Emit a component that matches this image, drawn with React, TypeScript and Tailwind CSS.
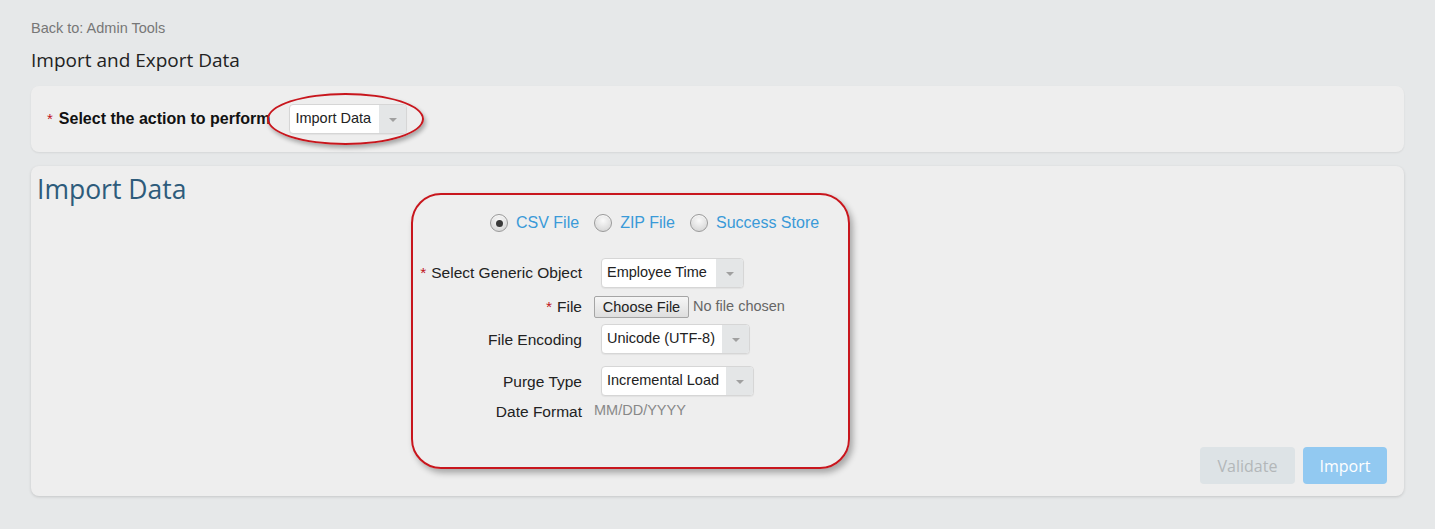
import { FC } from "react";

const arial = "font-['Liberation_Sans',Arial,sans-serif]";
const open = "font-['Open_Sans',sans-serif]";

interface SelectBoxProps {
  value: string;
  width: string;
}

const SelectBox: FC<SelectBoxProps> = ({ value, width }) => (
  <div
    className={`flex h-[30px] ${width} overflow-hidden rounded-[4px] border border-[#d6d6d6] bg-white shadow-[0_1px_1px_rgba(0,0,0,0.05)]`}
  >
    <div className={`flex flex-1 items-center pl-[5px] text-[14.5px] text-[#222] ${arial}`}>{value}</div>
    <div className="flex w-[27px] items-center justify-center bg-[#e4e6e7]">
      <span className="mt-[2px] h-0 w-0 border-x-[4px] border-t-[4px] border-x-transparent border-t-[#a0a0a0]" />
    </div>
  </div>
);

const Radio: FC<{ checked?: boolean; label: string }> = ({ checked, label }) => (
  <label className="flex items-center gap-[8px]">
    <span className="flex h-[18px] w-[18px] items-center justify-center rounded-full border border-[#9a9a9a] bg-[radial-gradient(circle_at_50%_35%,#fafafa,#cfcfcf)] shadow-[inset_0_1px_1px_rgba(255,255,255,0.8)]">
      {checked && <span className="h-[7px] w-[7px] rounded-full bg-[#3a3a3a]" />}
    </span>
    <span className={`text-[16px] text-[#3a9ad8] ${arial}`}>{label}</span>
  </label>
);

const FormLabel: FC<{ text: string; required?: boolean }> = ({ text, required }) => (
  <div className={`w-[169px] shrink-0 text-right text-[15.5px] text-[#222] ${arial}`}>
    {required && <span className="mr-[5px] text-[#c0141c]">*</span>}
    {text}
  </div>
);

export default function App() {
  return (
    <div className="min-h-[529px] bg-[#e6e8e9] px-[31px] pt-[19px]">
      <div className={`text-[14.5px] leading-[18px] text-[#777] ${arial}`}>Back to: Admin Tools</div>
      <h1 className={`mt-[11px] text-[19px] leading-[24px] text-[#222] ${open}`}>Import and Export Data</h1>

      {/* action select */}
      <div className="mt-[14px] flex h-[66px] items-center rounded-[8px] bg-[#eeeeee] pl-[16px] shadow-[0_1px_2px_rgba(0,0,0,0.08)]">
        <span className={`mr-[6px] text-[15px] text-[#c0141c] ${arial}`}>*</span>
        <span className={`text-[16px] font-bold text-[#111] ${arial}`}>Select the action to perform</span>
        <div className="relative ml-[19px]">
          <SelectBox value="Import Data" width="w-[118px]" />
          <div className="pointer-events-none absolute left-[-22px] top-[-11px] h-[52px] w-[157px] rounded-[50%] border-2 border-[#c8161d] shadow-[2px_3px_4px_rgba(0,0,0,0.3)]" />
        </div>
      </div>

      {/* import panel */}
      <div className="mt-[14px] flex items-end rounded-[8px] bg-[#eeeeee] pb-[12px] pr-[17px] shadow-[0_1px_3px_rgba(0,0,0,0.15)]">
        <div className="grid grid-cols-[374px_439px] pl-[6px]">
          <h2 className={`pt-[6px] text-[26.5px] leading-[34px] text-[#2d5b7b] ${open}`}>Import Data</h2>
          <div className="mb-[15px] mt-[27px] h-[276px] rounded-[30px] border-2 border-[#c8161d] pt-[19px] shadow-[3px_4px_6px_rgba(0,0,0,0.3)]">
            <div className="flex h-[18px] items-center gap-[15px] pl-[77px]">
              <Radio checked label="CSV File" />
              <Radio label="ZIP File" />
              <Radio label="Success Store" />
            </div>

            <div className="mt-[26px] flex items-center">
              <FormLabel text="Select Generic Object" required />
              <div className="ml-[19px]">
                <SelectBox value="Employee Time" width="w-[143px]" />
              </div>
            </div>

            <div className="mt-[7px] flex items-center">
              <FormLabel text="File" required />
              <button
                type="button"
                className={`ml-[12px] h-[22px] w-[95px] rounded-[2px] border border-[#a5a5a5] bg-[linear-gradient(#f6f6f6,#dedede)] text-[14.5px] text-[#222] ${arial}`}
              >
                Choose File
              </button>
              <span className={`ml-[4px] text-[14.5px] text-[#666] ${arial}`}>No file chosen</span>
            </div>

            <div className="mt-[6px] flex items-center">
              <FormLabel text="File Encoding" />
              <div className="ml-[19px]">
                <SelectBox value="Unicode (UTF-8)" width="w-[149px]" />
              </div>
            </div>

            <div className="mt-[12px] flex items-center">
              <FormLabel text="Purge Type" />
              <div className="ml-[19px]">
                <SelectBox value="Incremental Load" width="w-[153px]" />
              </div>
            </div>

            <div className="mt-[6px] flex h-[18px] items-center">
              <FormLabel text="Date Format" />
              <span className={`ml-[12px] text-[14.5px] text-[#888] ${arial}`}>MM/DD/YYYY</span>
            </div>
          </div>
        </div>

        <div className="ml-auto flex gap-[8px]">
          <button
            type="button"
            className={`h-[37px] w-[95px] rounded-[4px] bg-[#dde3e6] text-[16px] text-[#b3b7b9] ${open}`}
          >
            Validate
          </button>
          <button
            type="button"
            className={`h-[37px] w-[84px] rounded-[4px] bg-[#92c9f1] text-[16px] text-white ${open}`}
          >
            Import
          </button>
        </div>
      </div>
    </div>
  );
}
